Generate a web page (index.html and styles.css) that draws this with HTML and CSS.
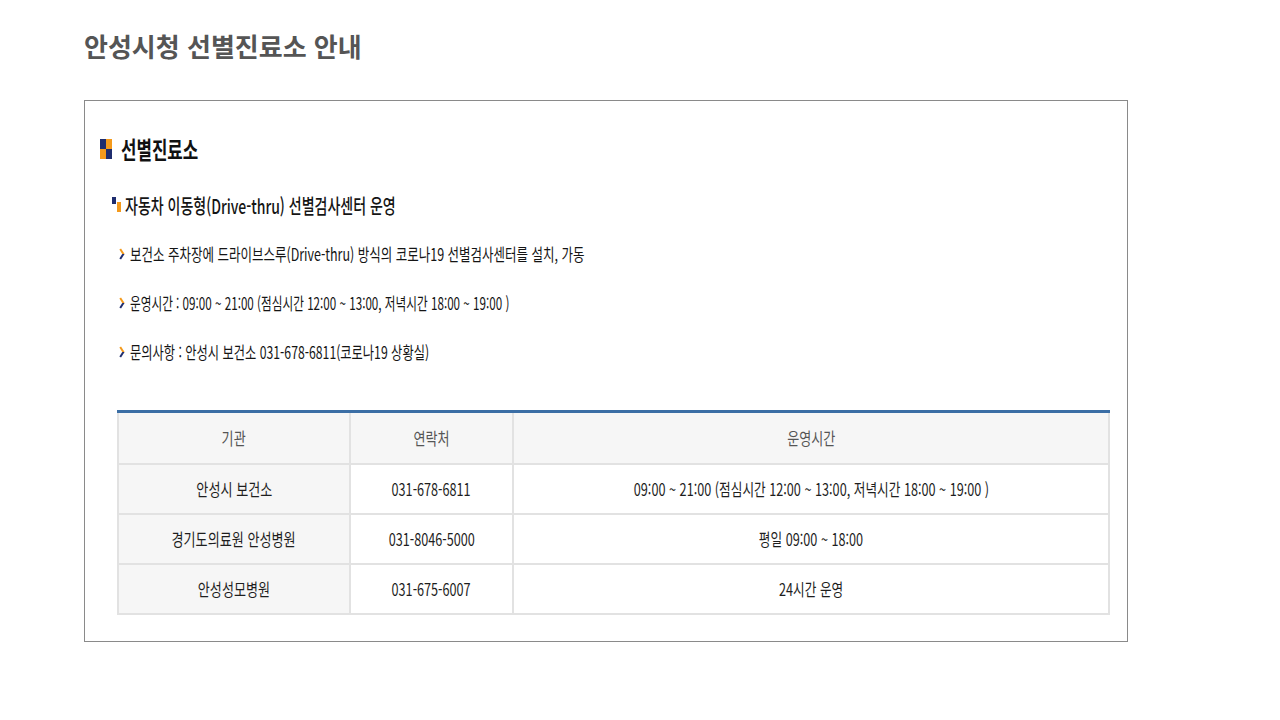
FILE: index.html
```html
<!DOCTYPE html>
<html lang="ko">
<head>
<meta charset="utf-8">
<title>안성시청 선별진료소 안내</title>
<link rel="stylesheet" href="styles.css">
</head>
<body>
<div class="page">
  <h1 class="title">안성시청 선별진료소 안내</h1>
  <div class="box">
    <div class="sec-head">
      <svg class="ico-main" width="12" height="20" viewBox="0 0 12 20">
        <rect x="0" y="0" width="6" height="10" fill="#1f2d6e"/>
        <rect x="6" y="0" width="6" height="10" fill="#f49a1c"/>
        <rect x="0" y="10" width="6" height="10" fill="#f49a1c"/>
        <rect x="6" y="10" width="6" height="10" fill="#1f2d6e"/>
      </svg>
      <span class="sq sec-title">선별진료소</span>
    </div>
    <div class="sub-head">
      <svg class="ico-sub" width="10" height="15" viewBox="0 0 10 15">
        <rect x="0" y="0" width="4" height="7" fill="#1f2d6e"/>
        <rect x="5" y="5" width="4" height="10" fill="#f49a1c"/>
      </svg>
      <span class="sq sub-title">자동차 이동형(Drive-thru) 선별검사센터 운영</span>
    </div>
    <ul class="bullets">
      <li class="bullet">
        <svg class="arrow" width="6" height="12" viewBox="0 0 6 12">
          <defs>
            <linearGradient id="ag" x1="0" y1="0" x2="0" y2="1">
              <stop offset="0.5" stop-color="#f49a1c"/>
              <stop offset="0.5" stop-color="#1f2d6e"/>
            </linearGradient>
          </defs>
          <polyline points="1.2,1 4.4,6 1.2,11" fill="none" stroke="url(#ag)" stroke-width="2"/>
        </svg>
        <span class="sq b1">보건소 주차장에 드라이브스루(Drive-thru) 방식의 코로나19 선별검사센터를 설치, 가동</span>
      </li>
      <li class="bullet">
        <svg class="arrow" width="6" height="12" viewBox="0 0 6 12">
          <polyline points="1.2,1 4.4,6 1.2,11" fill="none" stroke="url(#ag)" stroke-width="2"/>
        </svg>
        <span class="sq b2">운영시간 : 09:00 ~ 21:00 (점심시간 12:00 ~ 13:00, 저녁시간 18:00 ~ 19:00 )</span>
      </li>
      <li class="bullet">
        <svg class="arrow" width="6" height="12" viewBox="0 0 6 12">
          <polyline points="1.2,1 4.4,6 1.2,11" fill="none" stroke="url(#ag)" stroke-width="2"/>
        </svg>
        <span class="sq b3">문의사항 : 안성시 보건소 031-678-6811(코로나19 상황실)</span>
      </li>
    </ul>
    <table class="tbl">
      <colgroup>
        <col class="c1"><col class="c2"><col class="c3">
      </colgroup>
      <thead>
        <tr><th><span class="sq">기관</span></th><th><span class="sq">연락처</span></th><th><span class="sq">운영시간</span></th></tr>
      </thead>
      <tbody>
        <tr><th><span class="sq">안성시 보건소</span></th><td><span class="sq">031-678-6811</span></td><td><span class="sq">09:00 ~ 21:00 (점심시간 12:00 ~ 13:00, 저녁시간 18:00 ~ 19:00 )</span></td></tr>
        <tr><th><span class="sq">경기도의료원 안성병원</span></th><td><span class="sq">031-8046-5000</span></td><td><span class="sq">평일 09:00 ~ 18:00</span></td></tr>
        <tr><th><span class="sq">안성성모병원</span></th><td><span class="sq">031-675-6007</span></td><td><span class="sq">24시간 운영</span></td></tr>
      </tbody>
    </table>
  </div>
</div>
</body>
</html>
```

FILE: styles.css
```css
html, body {
  margin: 0;
  padding: 0;
  background: #ffffff;
}
body {
  font-family: "Noto Sans CJK KR", "Noto Sans", "Liberation Sans", sans-serif;
  color: #333;
}
.page {
  padding: 30px 0 0 84px;
}
.title {
  margin: 0;
  font-size: 26px;
  line-height: 32px;
  font-weight: 700;
  color: #555555;
}
.box {
  margin-top: 38px;
  width: 1042px;
  height: 540px;
  border: 1px solid #8a8a8a;
  box-sizing: content-box;
  padding: 0;
}
.sq {
  display: inline-block;
  white-space: nowrap;
  transform-origin: left center;
  transform: scaleX(0.71);
}
.sec-head {
  display: flex;
  align-items: center;
  margin: 33px 0 0 15px;
  height: 30px;
}
.ico-main {
  display: block;
  flex: none;
}
.sec-title {
  margin-left: 9px;
  font-size: 24px;
  font-weight: 700;
  color: #111;
  line-height: 30px;
  transform: scaleX(0.7);
}
.sub-head {
  display: flex;
  align-items: center;
  margin: 29px 0 0 27px;
  height: 26px;
}
.ico-sub {
  display: block;
  flex: none;
  margin-top: -4px;
}
.sub-title {
  margin-left: 3px;
  font-size: 20px;
  line-height: 26px;
  font-weight: 500;
  color: #151515;
  transform: scaleX(0.7);
}
.bullets {
  list-style: none;
  margin: 23px 0 0 34px;
  padding: 0;
  display: flex;
  flex-direction: column;
  gap: 25px;
}
.bullet {
  display: flex;
  align-items: center;
  height: 24px;
  font-size: 17px;
  line-height: 24px;
  font-weight: 400;
  color: #151515;
}
.b1 { transform: scaleX(0.735); }
.b2 { transform: scaleX(0.685); }
.b3 { transform: scaleX(0.72); }
.arrow {
  display: block;
  flex: none;
  margin-right: 5px;
}
.tbl {
  margin: 46px 0 0 32px;
  width: 991px;
  border-collapse: collapse;
  table-layout: fixed;
  border-top: 3px solid #3b6ea5;
  font-size: 17px;
}
.c1 { width: 232px; }
.c2 { width: 163px; }
.c3 { width: 596px; }
.tbl th, .tbl td {
  border: 2px solid #e2e2e2;
  text-align: center;
  padding: 0;
  font-weight: 400;
  line-height: 24px;
}
.tbl .sq {
  transform-origin: center center;
  transform: scaleX(0.77);
}
.tbl td .sq {
  transform: scaleX(0.745);
}
.tbl thead th {
  height: 50px;
  background: #f6f6f6;
  color: #555;
  border-top: none;
}
.tbl thead th .sq {
  transform: scaleX(0.77);
}
.tbl tbody th {
  background: #f6f6f6;
  color: #1e1e1e;
  height: 48px;
}
.tbl tbody td {
  background: #fff;
  color: #1e1e1e;
  height: 48px;
}
```
